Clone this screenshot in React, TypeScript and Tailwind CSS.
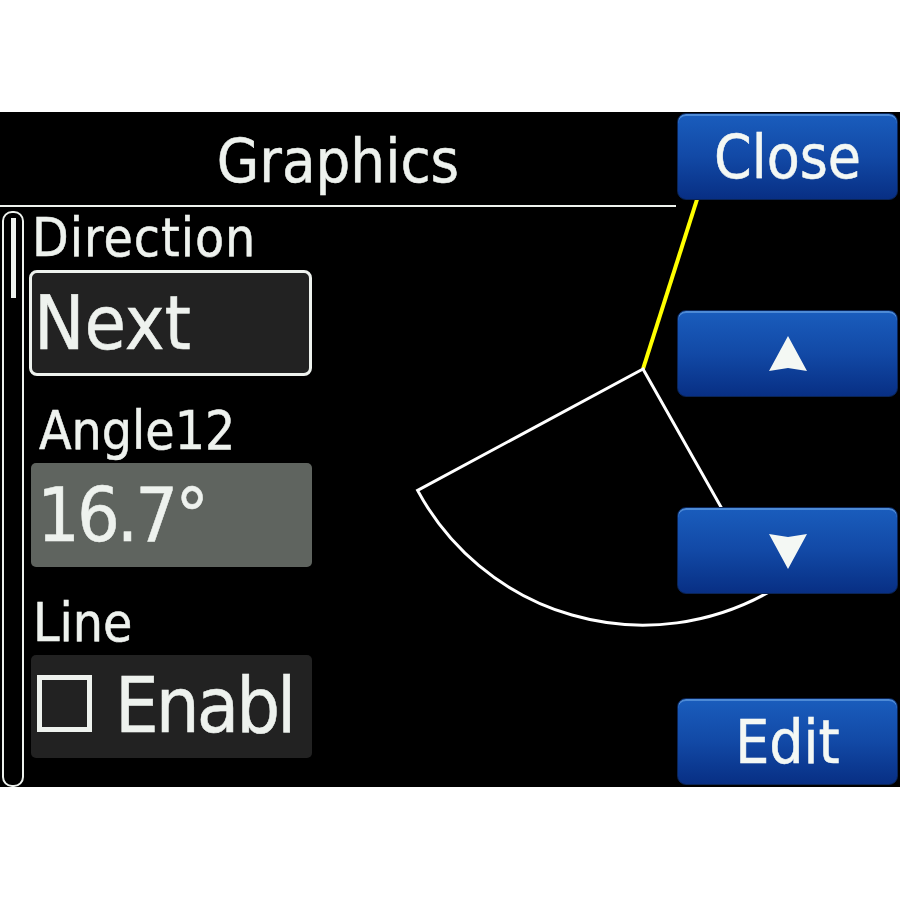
import React from "react";

const font = "font-['DejaVu_Sans_Condensed','DejaVu_Sans',sans-serif]";
const stroke = "[-webkit-text-stroke:0.5px_#eef2ee]";

function Btn({ children, className }: { children: React.ReactNode; className?: string }) {
  return (
    <div
      className={`relative h-[87px] w-[221px] rounded-[9px] border border-[#0a2456] bg-gradient-to-b from-[#1a5dbd] via-[#1249a6] to-[#082f84] shadow-[inset_0_2px_0_#4d8ad6] flex items-center justify-center text-[60px] leading-none text-[#f4f8f4] [-webkit-text-stroke:0.5px_#f4f8f4] ${className ?? ""}`}
    >
      {children}
    </div>
  );
}

export default function App() {
  return (
    <div className={`w-[900px] h-[900px] bg-white pt-[112px] ${font}`}>
      <div className="relative h-[675px] bg-black flex">
        <svg className="absolute left-0 top-0" width="900" height="675" viewBox="0 0 900 675">
          <line x1="643" y1="257" x2="700" y2="78" stroke="#ffff00" strokeWidth="4" />
          <path
            d="M 643 257 L 417.6 378.4 A 256 256 0 0 0 769 480 Z"
            fill="none"
            stroke="#ffffff"
            strokeWidth="3"
            strokeLinejoin="miter"
          />
        </svg>

        <div className={`relative w-[676px] flex flex-col ${stroke}`}>
          <div className="h-[93px] flex items-center justify-center text-[61px] leading-none text-[#eef2ee] pt-[4px]">
            Graphics
          </div>
          <div className="h-[2px] bg-[#eef2ee]" />
          <div className="flex flex-1">
            <div className="ml-[2px] mt-[4px] w-[22px] h-[576px] rounded-[10px] border-2 border-[#eef2ee] flex justify-center pt-[5px]">
              <div className="w-[5px] h-[80px] bg-[#eef2ee]" />
            </div>
            <div className="ml-[5px] w-[283px] flex flex-col pt-[4px] text-[#eef2ee]">
              <div className="h-[52px] text-[53px] leading-none pl-[3px] tracking-[1px]">Direction</div>
              <div className="mt-[7px] h-[106px] rounded-[8px] border-[3px] border-[#eef2ee] bg-[#222222] flex items-center text-[75px] leading-none pl-[2px]">
                Next
              </div>
              <div className="mt-[28px] h-[52px] text-[53px] leading-none pl-[10px]">Angle12</div>
              <div className="mt-[7px] h-[104px] ml-[2px] rounded-[5px] bg-[#5f645f] flex items-center text-[75px] leading-none pl-[6px] tracking-[-3px]">
                16.7°
              </div>
              <div className="mt-[29px] h-[52px] text-[53px] leading-none pl-[4px]">Line</div>
              <div className="mt-[7px] h-[103px] ml-[2px] rounded-[5px] bg-[#222222] flex items-start text-[77px] leading-none pl-[6px] pt-[12px] gap-[23px]">
                <span className="mt-[8px] inline-block w-[55px] h-[57px] border-[5px] border-[#eef2ee]" />
                <span className="tracking-[-3px]">Enabl</span>
              </div>
            </div>
          </div>
        </div>

        <div className="relative flex flex-col pt-[1px] ml-[1px]">
          <Btn>Close</Btn>
          <Btn className="mt-[110px]">
            <svg width="38" height="36" viewBox="0 0 38 36">
              <polygon points="19,0 38,35 19,32 0,35" fill="#f4f8f4" />
            </svg>
          </Btn>
          <Btn className="mt-[110px]">
            <svg width="38" height="36" viewBox="0 0 38 36">
              <polygon points="0,1 19,4 38,1 19,36" fill="#f4f8f4" />
            </svg>
          </Btn>
          <Btn className="mt-[104px]">Edit</Btn>
        </div>
      </div>
    </div>
  );
}
